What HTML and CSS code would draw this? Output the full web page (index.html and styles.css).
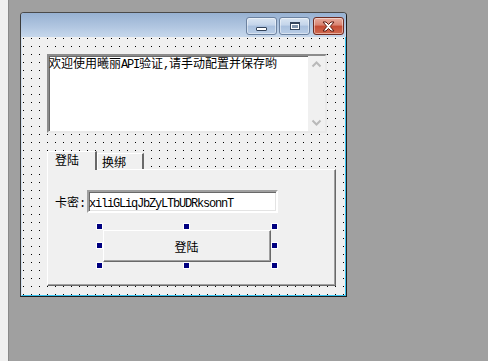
FILE: index.html
```html
<!DOCTYPE html>
<html lang="zh-CN">
<head>
    <meta charset="UTF-8">
    <title>窗口设计</title>
    <link rel="stylesheet" href="styles.css">
</head>
<body>
    <div class="ide">
        <div class="side"></div>
        <div class="workspace">
            <div class="window">
                <div class="titlebar">
                    <div class="cap-btn min"><span class="min-glyph"></span></div>
                    <div class="cap-btn max"><span class="max-glyph"></span></div>
                    <div class="cap-btn close">
                        <svg width="15" height="11" viewBox="0 0 15 11">
                            <path d="M2 1 L5 1 L7.5 3.5 L10 1 L13 1 L9.2 5.5 L13 10 L10 10 L7.5 7.5 L5 10 L2 10 L5.8 5.5 Z" fill="#fff" stroke="#5a1a12" stroke-width="1" stroke-linejoin="round"/>
                        </svg>
                    </div>
                </div>
                <div class="client">
                    <div class="memo">
                        <div class="memo-text">欢迎使用曦丽<span class="half">API</span>验证<span class="half">,</span>请手动配置并保存哟</div>
                        <div class="vscroll">
                            <svg width="17" height="17" viewBox="0 0 17 17"><path d="M4.5 10.5 L8.5 6.5 L12.5 10.5" fill="none" stroke="#b9b9b9" stroke-width="2"/></svg>
                            <svg width="17" height="17" viewBox="0 0 17 17"><path d="M4.5 6.5 L8.5 10.5 L12.5 6.5" fill="none" stroke="#b9b9b9" stroke-width="2"/></svg>
                        </div>
                    </div>

                    <div class="tabs">
                        <div class="tab-row">
                            <div class="tab active">登陆</div>
                            <div class="tab">换绑</div>
                        </div>
                        <div class="tab-panel">
                            <div class="field-row">
                                <span class="field-label">卡密<span class="half">:</span></span>
                                <div class="text-input"><span class="half">xiliGLiqJbZyLTbUDRksonnT</span></div>
                            </div>
                            <div class="btn-wrap">
                                <div class="push-btn">登陆</div>
                                <span class="handle h-tl"></span>
                                <span class="handle h-tc"></span>
                                <span class="handle h-tr"></span>
                                <span class="handle h-ml"></span>
                                <span class="handle h-mr"></span>
                                <span class="handle h-bl"></span>
                                <span class="handle h-bc"></span>
                                <span class="handle h-br"></span>
                            </div>
                        </div>
                    </div>
                </div>
            </div>
        </div>
    </div>
</body>
</html>
```

FILE: styles.css
```css
* {
    box-sizing: border-box;
}

body {
    margin: 0;
    width: 488px;
    height: 361px;
    overflow: hidden;
    background-color: #a0a0a0;
    font-family: "Noto Sans CJK SC", sans-serif;
    font-size: 12px;
    color: #000;
}

.ide {
    display: flex;
    height: 361px;
}

.side {
    width: 9px;
    background-color: #f0f0f0;
    border-right: 1px solid #8a8a8a;
}

.workspace {
    flex: 1;
    padding: 12px 0 0 11px;
}

.half {
    font-family: "Liberation Mono", monospace;
    letter-spacing: -1.2px;
}

/* the form being designed */
.window {
    width: 327px;
    height: 285px;
    display: flex;
    flex-direction: column;
    border: 1px solid #1c1c1c;
    border-top-color: #4a4a4a;
    border-left-color: #3a3a3a;
    border-radius: 4px 4px 0 0;
    background-color: #c6d7ec;
}

.titlebar {
    height: 24px;
    display: flex;
    justify-content: flex-end;
    padding: 4px 2px 0 0;
    background: linear-gradient(#97b1d2, #b2c7e1 60%, #c7d8ec);
    border-radius: 3px 3px 0 0;
}

.cap-btn {
    width: 31px;
    height: 18px;
    border: 1px solid #6c82a0;
    border-radius: 3px;
    display: flex;
    align-items: center;
    justify-content: center;
    background: linear-gradient(#dae5f2, #c3d4ea 45%, #a9c0de 50%, #b9cde6);
    box-shadow: inset 0 0 0 1px rgba(255, 255, 255, 0.45);
}

.cap-btn.max {
    margin-left: 2px;
}

.cap-btn.close {
    margin-left: 3px;
    border-color: #6e2a20;
    background: linear-gradient(#e7ada0, #d98270 45%, #c44a33 50%, #d06a50);
}

.min-glyph {
    width: 11px;
    height: 4px;
    margin-top: 5px;
    background-color: #fff;
    border: 1px solid #33445c;
    border-radius: 1px;
}

.max-glyph {
    width: 10px;
    height: 8px;
    border: 1px solid #33445c;
    border-top-width: 2px;
    background-color: #fff;
    box-shadow: inset 0 0 0 1px #fff, inset 0 0 0 3px #8093ab;
}

.client {
    flex: 1;
    background-color: #f0f0f0;
    background-image: conic-gradient(from 270deg at 1px 1px, #000 90deg, transparent 0);
    background-size: 8px 8px;
    background-position: 1px 1px;
    border-left: 1px solid #d3e1f1;
    border-right: 1px solid #35c1ee;
    border-bottom: 1px solid #35c1ee;
    padding: 17px 0 0 25px;
}

.memo {
    width: 280px;
    height: 79px;
    display: flex;
    background-color: #fff;
    border: 2px solid;
    border-color: #8c8c8c #e9e9e9 #e9e9e9 #8c8c8c;
    box-shadow: inset 1px 1px 0 #6a6a6a;
}

.memo-text {
    flex: 1;
    padding: 0 0 0 0;
    line-height: 14px;
    white-space: nowrap;
}

.vscroll {
    width: 17px;
    display: flex;
    flex-direction: column;
    justify-content: space-between;
    background-color: #f0f0f0;
}

.vscroll svg {
    display: block;
}

.tabs {
    margin-top: 18px;
    width: 289px;
}

.tab-row {
    height: 18px;
    display: flex;
    align-items: flex-end;
}

.tab {
    height: 16px;
    width: 47px;
    padding-left: 4px;
    line-height: 15px;
    border-top: 1px solid #fff;
    border-left: 1px solid #fff;
    border-right: 2px solid #696969;
    background-color: #f0f0f0;
}

.tab.active {
    width: 50px;
    height: 19px;
    margin-bottom: -1px;
    padding-left: 7px;
    line-height: 16px;
    z-index: 1;
}

.tab-panel {
    height: 117px;
    background-color: #f0f0f0;
    border-top: 1px solid #fff;
    border-left: 1px solid #fff;
    border-right: 1px solid #696969;
    border-bottom: 1px solid #696969;
    box-shadow: inset -1px -1px 0 #a0a0a0;
    padding: 20px 0 0 7px;
}

.field-row {
    display: flex;
    align-items: center;
}

.field-label {
    width: 32px;
}

.text-input {
    width: 191px;
    height: 23px;
    background-color: #fff;
    border: 2px solid;
    border-color: #a0a0a0 #fff #fff #a0a0a0;
    box-shadow: inset 1px 1px 0 #696969, inset -1px -1px 0 #e3e3e3;
    padding: 0 0 0 0;
    line-height: 19px;
    white-space: nowrap;
    overflow: hidden;
}

.btn-wrap {
    position: relative;
    width: 168px;
    height: 32px;
    margin: 17px 0 0 48px;
}

.push-btn {
    width: 100%;
    height: 100%;
    display: flex;
    align-items: center;
    justify-content: center;
    background-color: #f0f0f0;
    border-top: 1px solid #fff;
    border-left: 1px solid #fff;
    border-right: 1px solid #696969;
    border-bottom: 1px solid #696969;
    box-shadow: inset -1px -1px 0 #a0a0a0;
    padding-right: 1px;
}

/* selection handles of the designer */
.handle {
    position: absolute;
    width: 5px;
    height: 5px;
    background-color: #000080;
    box-shadow: 0 0 0 1px #fff;
}

.h-tl { left: -6px; top: -6px; }
.h-tc { left: 81px; top: -6px; }
.h-tr { right: -6px; top: -6px; }
.h-ml { left: -6px; top: 13px; }
.h-mr { right: -6px; top: 13px; }
.h-bl { left: -6px; bottom: -6px; }
.h-bc { left: 81px; bottom: -6px; }
.h-br { right: -6px; bottom: -6px; }
```
